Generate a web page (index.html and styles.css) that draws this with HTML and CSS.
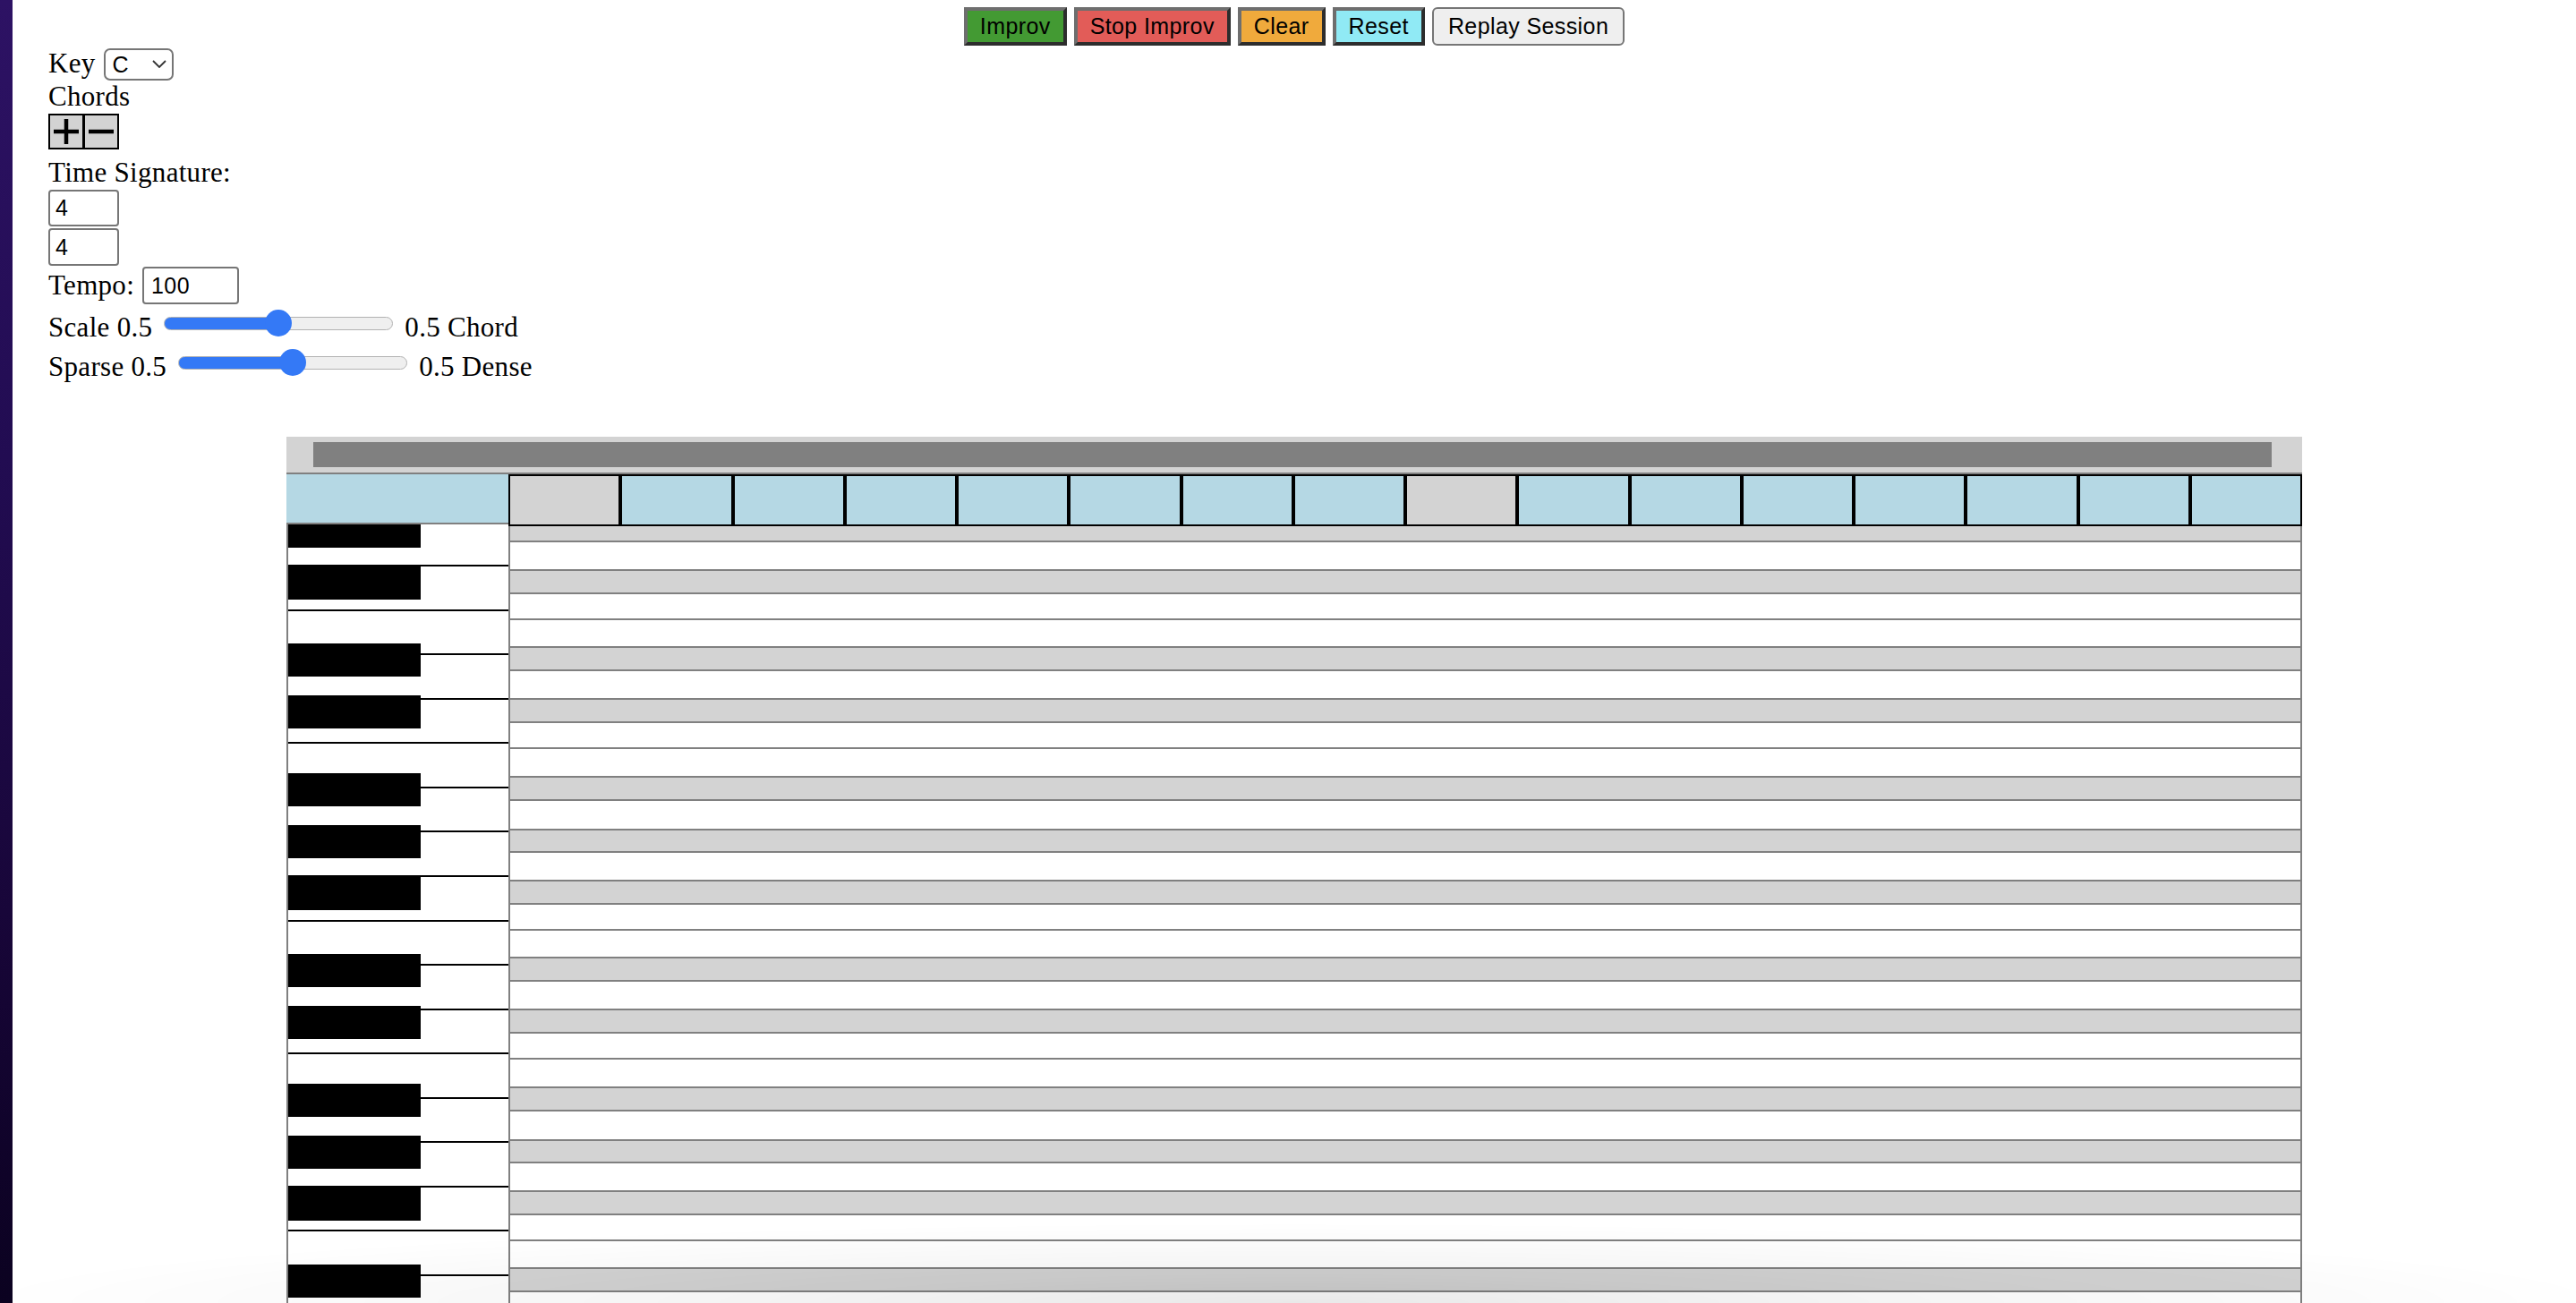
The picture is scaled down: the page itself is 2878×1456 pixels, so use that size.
FILE: index.html
```html
<!DOCTYPE html>
<html lang="en">
<head>
<meta charset="utf-8">
<title>Improv</title>
<link rel="stylesheet" href="styles.css">
</head>
<body>
<div class="page">
  <div class="desktop-edge"></div>
  <main class="app">
    <div class="toolbar">
      <button class="tb-btn improv">Improv</button>
      <button class="tb-btn stop">Stop Improv</button>
      <button class="tb-btn clear">Clear</button>
      <button class="tb-btn reset">Reset</button>
      <button class="tb-btn replay">Replay Session</button>
    </div>

    <div class="controls">
      <div class="key-row">
        <span>Key</span>
        <div class="select-wrap">
          <select class="key-select"><option>C</option></select>
          <svg class="chev" width="16" height="9" viewBox="0 0 16 9"><polyline points="1,1 8,8 15,1" fill="none" stroke="#333" stroke-width="1.8"/></svg>
        </div>
      </div>
      <div class="label chords-label">Chords</div>
      <div class="chord-btns">
        <button class="chord-btn" aria-label="add chord"><svg width="30" height="30" viewBox="0 0 30 30"><path d="M15 1V29M1 15H29" stroke="#000" stroke-width="4.5"/></svg></button>
        <button class="chord-btn" aria-label="remove chord"><svg width="30" height="30" viewBox="0 0 30 30"><path d="M1 15H29" stroke="#000" stroke-width="4.5"/></svg></button>
      </div>
      <div class="label ts-label">Time Signature:</div>
      <input class="num-input ts-input" type="text" value="4">
      <input class="num-input ts-input ts-second" type="text" value="4">
      <div class="tempo-row">
        <span>Tempo:</span>
        <input class="num-input tempo-input" type="text" value="100">
      </div>
      <div class="slider-row scale-row"><span>Scale 0.5</span><input class="slider" type="range" min="0" max="1" step="0.01" value="0.5"><span>0.5 Chord</span></div>
      <div class="slider-row sparse-row"><span>Sparse 0.5</span><input class="slider" type="range" min="0" max="1" step="0.01" value="0.5"><span>0.5 Dense</span></div>
    </div>

    <section class="roll">
      <div class="roll-scroll"><div class="roll-thumb"></div></div>
      <div class="roll-main">
        <div class="keys-col">
          <div class="keys-head"></div>
          <div class="piano">
            <div class="wk wk-top"></div>
            <div class="wk"></div><div class="wk"></div><div class="wk"></div><div class="wk"></div>
            <div class="wk"></div><div class="wk"></div><div class="wk"></div><div class="wk"></div>
            <div class="wk"></div><div class="wk"></div><div class="wk"></div><div class="wk"></div>
            <div class="wk"></div><div class="wk"></div><div class="wk"></div><div class="wk"></div>
            <div class="wk"></div>

            <div class="bk bk-cut" style="top:0px"></div>
            <div class="bk bk-tall" style="top:45px"></div>
            <div class="bk" style="top:133px"></div>
            <div class="bk" style="top:191px"></div>
            <div class="bk" style="top:278px"></div>
            <div class="bk" style="top:336px"></div>
            <div class="bk bk-tall" style="top:392px"></div>
            <div class="bk" style="top:480px"></div>
            <div class="bk" style="top:538px"></div>
            <div class="bk" style="top:625px"></div>
            <div class="bk" style="top:683px"></div>
            <div class="bk bk-tall" style="top:739px"></div>
            <div class="bk" style="top:827px"></div>
            <div class="bk" style="top:885px"></div>
          </div>
        </div>
        <div class="grid-col">
          <div class="beat-head">
            <div class="beat bar"></div><div class="beat"></div><div class="beat"></div><div class="beat"></div>
            <div class="beat"></div><div class="beat"></div><div class="beat"></div><div class="beat"></div>
            <div class="beat bar"></div><div class="beat"></div><div class="beat"></div><div class="beat"></div>
            <div class="beat"></div><div class="beat"></div><div class="beat"></div><div class="beat"></div>
          </div>
          <div class="note-rows">
            <div class="nr sharp n-first"></div>
            <div class="nr n-g"></div><div class="nr sharp n-fs"></div><div class="nr n-f"></div><div class="nr n-e"></div>
            <div class="nr sharp n-ds"></div><div class="nr n-d"></div><div class="nr sharp n-cs"></div><div class="nr n-c"></div>
            <div class="nr n-b"></div><div class="nr sharp n-as"></div><div class="nr n-a"></div><div class="nr sharp n-gs"></div>
            <div class="nr n-g"></div><div class="nr sharp n-fs"></div><div class="nr n-f"></div><div class="nr n-e"></div>
            <div class="nr sharp n-ds"></div><div class="nr n-d"></div><div class="nr sharp n-cs"></div><div class="nr n-c"></div>
            <div class="nr n-b"></div><div class="nr sharp n-as"></div><div class="nr n-a"></div><div class="nr sharp n-gs"></div>
            <div class="nr n-g"></div><div class="nr sharp n-fs"></div><div class="nr n-f"></div><div class="nr n-e"></div>
            <div class="nr sharp n-ds"></div><div class="nr n-d"></div><div class="nr sharp n-cs"></div>
          </div>
        </div>
      </div>
    </section>
  </main>
  <div class="bottom-shade"></div>
</div>
</body>
</html>
```

FILE: styles.css
```css
html, body {
  margin: 0;
  padding: 0;
  height: 100%;
  overflow: hidden;
  background: #fff;
}

body {
  font-family: "Liberation Serif", "Times New Roman", serif;
  font-size: 31px;
  letter-spacing: 0.3px;
  color: #000;
}

.page {
  display: flex;
  height: 100vh;
  position: relative;
}

.desktop-edge {
  flex: none;
  width: 14px;
  background: linear-gradient(180deg, #2d1264 0%, #220c52 35%, #180639 70%, #10032a 88%, #0b0220 100%);
}

.app {
  flex: 1;
  min-width: 0;
}

/* toolbar */
.toolbar {
  display: flex;
  justify-content: center;
  gap: 8px;
  padding-top: 8px;
}

.tb-btn {
  height: 43px;
  box-sizing: border-box;
  padding: 0 14px;
  margin: 0;
  font-family: "Liberation Sans", Arial, sans-serif;
  font-size: 25px;
  letter-spacing: 0.4px;
  color: #000;
  border: 4px solid;
  border-color: #6e6e6e #2d2d2d #2d2d2d #6e6e6e;
  border-radius: 0;
}

.improv { background: #439a33; }
.stop { background: #e25c58; }
.clear { background: #f0aa3c; }
.reset { background: #90eaf5; }

.replay {
  background: #efefef;
  border: 2px solid #767676;
  border-radius: 6px;
  padding: 0 16px;
}

/* left controls */
.controls {
  padding-left: 40px;
}

.key-row {
  display: flex;
  align-items: center;
  gap: 9px;
  height: 36px;
  margin-top: 2px;
}

.select-wrap {
  position: relative;
  width: 78px;
  height: 36px;
}

.key-select {
  -webkit-appearance: none;
  appearance: none;
  width: 100%;
  height: 100%;
  margin: 0;
  box-sizing: border-box;
  border: 2px solid #767676;
  border-radius: 7px;
  background: #fff;
  padding: 0 0 0 8px;
  font-family: "Liberation Sans", Arial, sans-serif;
  font-size: 25px;
  color: #000;
}

.chev {
  position: absolute;
  right: 8px;
  top: 14px;
  pointer-events: none;
}

.label {
  line-height: 32px;
  margin-top: 2px;
}

.chords-label {
  margin-top: 3px;
}

.chord-btns {
  display: flex;
  margin-top: 3px;
}

.chord-btn {
  width: 40px;
  height: 40px;
  box-sizing: border-box;
  margin: 0;
  padding: 0;
  border: 2px solid #000;
  background: #d3d3d3;
  display: flex;
  align-items: center;
  justify-content: center;
}

.chord-btn + .chord-btn {
  margin-left: -1px;
}

.ts-label {
  margin-top: 10px;
}

.num-input {
  display: block;
  box-sizing: border-box;
  margin: 0;
  border: 2px solid #767676;
  border-radius: 4px;
  padding: 0 6px;
  font-family: "Liberation Sans", Arial, sans-serif;
  font-size: 25px;
  letter-spacing: 0.4px;
  color: #000;
  background: #fff;
}

.ts-input {
  width: 79px;
  height: 41px;
  margin-top: 3px;
}

.ts-second {
  margin-top: 2px;
  height: 42px;
}

.tempo-row {
  display: flex;
  align-items: center;
  gap: 9px;
  margin-top: 1px;
  line-height: 32px;
}

.tempo-input {
  width: 108px;
  height: 42px;
  padding-left: 8px;
}

.slider-row {
  line-height: 32px;
  white-space: nowrap;
}

.scale-row { margin-top: 6px; }
.sparse-row { margin-top: 8px; }

.slider {
  -webkit-appearance: none;
  appearance: none;
  width: 256px;
  height: 30px;
  margin: 0 13px;
  padding: 0;
  background: transparent;
  vertical-align: baseline;
}

.slider::-webkit-slider-runnable-track {
  height: 15px;
  box-sizing: border-box;
  border-radius: 8px;
  border: 1px solid #b2b2b2;
  background: linear-gradient(to right, #3479f6 0%, #3479f6 50%, #efefef 50%, #efefef 100%);
}

.slider::-webkit-slider-thumb {
  -webkit-appearance: none;
  appearance: none;
  width: 30px;
  height: 30px;
  border-radius: 50%;
  background: #3479f6;
  margin-top: -8.5px;
  border: none;
}

/* piano roll */
.roll {
  width: 2252px;
  margin: 62px auto 0;
}

.roll-scroll {
  box-sizing: content-box;
  height: 28px;
  padding: 6px 34px 6px 30px;
  background: #d3d3d3;
  border-bottom: 2px solid #808080;
}

.roll-thumb {
  height: 28px;
  background: #808080;
}

.roll-main {
  display: flex;
  height: 960px;
  overflow: hidden;
}

.keys-col {
  flex: none;
  width: 248px;
}

.keys-head {
  height: 54px;
  background: #b5d8e4;
  border-bottom: 2px solid #808080;
}

.piano {
  position: relative;
  border-left: 2px solid #808080;
}

.wk {
  height: 49.5625px;
  box-sizing: border-box;
  border-bottom: 2px solid #000;
  background: #fff;
}

.wk-top {
  height: 47px;
}

.bk {
  position: absolute;
  left: 0;
  width: 148px;
  height: 37px;
  background: #000;
}

.bk-tall { height: 39px; }
.bk-cut { height: 26px; }

.grid-col {
  flex: 1;
  min-width: 0;
}

.beat-head {
  display: grid;
  grid-template-columns: repeat(16, 1fr);
  height: 58px;
}

.beat {
  box-sizing: border-box;
  border: 2px solid #000;
  background: #b5d8e4;
}

.beat.bar {
  background: #d3d3d3;
}

.note-rows {
  border-left: 2px solid #808080;
  border-right: 2px solid #808080;
}

.nr {
  box-sizing: border-box;
  border-bottom: 2px solid #808080;
  background: #fff;
}

.nr.sharp {
  background: #d3d3d3;
}

.n-first { height: 18px; }
.n-g { height: 32px; }
.n-fs { height: 26px; }
.n-f { height: 29px; }
.n-e { height: 31px; }
.n-ds { height: 26px; }
.n-d { height: 32px; }
.n-cs { height: 26px; }
.n-c { height: 29px; }
.n-b { height: 32px; }
.n-as { height: 26px; }
.n-a { height: 33px; }
.n-gs { height: 25px; }

.bottom-shade {
  position: fixed;
  left: 14px;
  right: 0;
  bottom: 0;
  height: 90px;
  pointer-events: none;
  background: radial-gradient(ellipse 52% 100% at 50% 100%, rgba(0, 0, 0, 0.085) 0%, rgba(0, 0, 0, 0.04) 45%, rgba(0, 0, 0, 0) 100%);
}
```
